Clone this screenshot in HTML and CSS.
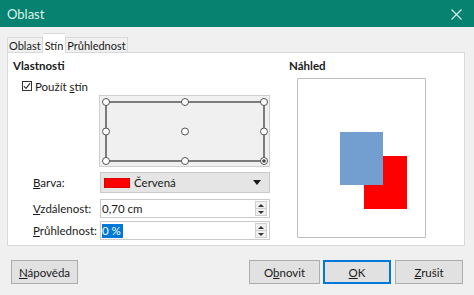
FILE: index.html
```html
<!DOCTYPE html>
<html lang="cs">
<head>
  <meta charset="UTF-8">
  <title>Oblast</title>
  <link rel="stylesheet" href="styles.css">
</head>
<body>
  <div class="window">
    <div class="titlebar">
      <span class="title">Oblast</span>
      <svg class="close" width="13" height="11" viewBox="0 0 13 11">
        <path d="M1.5 0.5 L11.5 10.5 M11.5 0.5 L1.5 10.5" stroke="#d6efe9" stroke-width="1.2" fill="none"/>
      </svg>
    </div>

    <div class="tabs">
      <div class="tab">Oblast</div>
      <div class="tab active">Stín</div>
      <div class="tab">Průhlednost</div>
    </div>

    <div class="panel">
      <div class="props">
        <div class="heading">Vlastnosti</div>
        <label class="check-row">
          <span class="checkbox">
            <svg width="8" height="8" viewBox="0 0 8 8"><path d="M0.8 4.2 L3 6.4 L7.2 1.2" stroke="#333" stroke-width="1.1" fill="none"/></svg>
          </span>
          <span>Použít <u>s</u>tín</span>
        </label>

        <div class="position-box">
          <svg width="171" height="72" viewBox="0 0 171 72">
            <rect x="7" y="7" width="158" height="59" fill="none" stroke="#4a4a4a" stroke-width="1.4"/>
            <g fill="#fff" stroke="#555" stroke-width="1">
              <circle cx="7" cy="7" r="3.5"/>
              <circle cx="86" cy="7" r="3.5"/>
              <circle cx="165" cy="7" r="3.5"/>
              <circle cx="7" cy="36.5" r="3.5"/>
              <circle cx="86" cy="36.5" r="3.5"/>
              <circle cx="165" cy="36.5" r="3.5"/>
              <circle cx="7" cy="66" r="3.5"/>
              <circle cx="86" cy="66" r="3.5"/>
              <circle cx="165" cy="66" r="3.5"/>
            </g>
            <circle cx="165" cy="66" r="1.8" fill="#444"/>
          </svg>
        </div>

        <div class="field field-color">
          <span class="label"><u>B</u>arva:</span>
          <div class="dropdown">
            <span class="swatch"></span>
            <span class="dropdown-text">Červená</span>
            <span class="arrow"></span>
          </div>
        </div>
        <div class="field field-dist">
          <span class="label"><u>V</u>zdálenost:</span>
          <div class="spin">
            <span class="spin-text">0,70 cm</span>
            <span class="spin-buttons"><span class="up"></span><span class="down"></span></span>
          </div>
        </div>
        <div class="field field-trans">
          <span class="label"><u>P</u>růhlednost:</span>
          <div class="spin">
            <span class="spin-text"><span class="selected">0 %</span></span>
            <span class="spin-buttons"><span class="up"></span><span class="down"></span></span>
          </div>
        </div>
      </div>

      <div class="preview-col">
        <div class="heading">Náhled</div>
        <div class="preview">
          <svg width="127" height="158" viewBox="0 0 127 158">
            <rect x="66" y="77" width="43" height="53" fill="#ff0000"/>
            <rect x="42" y="53" width="43" height="53" fill="#729fcf"/>
          </svg>
        </div>
      </div>
    </div>

    <div class="buttons">
      <button class="btn btn-help"><u>N</u>ápověda</button>
      <div class="right-buttons">
        <button class="btn btn-reset">O<u>b</u>novit</button>
        <button class="btn btn-ok"><u>O</u>K</button>
        <button class="btn btn-cancel"><u>Z</u>rušit</button>
      </div>
    </div>
  </div>
</body>
</html>
```

FILE: styles.css
```css
body {
  margin: 0;
  font-family: "Lato", "Open Sans", sans-serif;
  font-size: 11px;
  color: #1a1a1a;
}
u {
  text-decoration-thickness: 1px;
  text-underline-offset: 1px;
}
.window {
  width: 474px;
  height: 295px;
  background: #f0f0f0;
  overflow: hidden;
}
.titlebar {
  height: 27px;
  background: #088270;
  display: flex;
  align-items: center;
  justify-content: space-between;
  padding: 0 11px 0 7px;
}
.title {
  font-family: "Lato", sans-serif;
  font-size: 13px;
  color: #dcf2ec;
}
.close {
  margin-top: 1px;
}

.tabs {
  display: flex;
  align-items: flex-end;
  height: 19px;
  margin-top: 6px;
  padding-left: 7px;
}
.tab {
  height: 14px;
  line-height: 15px;
  padding: 0 1px 0 1px;
  border: 1px solid #d9d9d9;
  border-bottom: none;
  background: #f0f0f0;
  overflow: hidden;
  font-size: 11px;
}
.tab.active {
  height: 19px;
  line-height: 23px;
  background: #fff;
  margin-bottom: -1px;
  position: relative;
  z-index: 1;
  border-left: none;
  border-right: none;
  padding: 0 2px;
}

.panel {
  display: flex;
  width: 458px;
  height: 194px;
  margin-left: 7px;
  background: #fff;
  border: 1px solid #d9d9d9;
  box-sizing: border-box;
}
.props {
  width: 274px;
  padding: 6px 0 0 5px;
  box-sizing: border-box;
}
.heading {
  font-weight: bold;
  font-size: 11.5px;
  line-height: 14px;
  height: 14px;
}
.check-row {
  display: flex;
  align-items: center;
  height: 14px;
  margin-top: 6px;
  padding-left: 9px;
  font-size: 11.5px;
}
.checkbox {
  width: 10px;
  height: 10px;
  border: 1px solid #333;
  box-sizing: border-box;
  display: flex;
  align-items: center;
  justify-content: center;
  margin-right: 3px;
}
.position-box {
  width: 171px;
  height: 72px;
  margin: 2px 0 0 86px;
  background: #f0f0f0;
  border: 1px solid #cfcfcf;
  box-sizing: border-box;
  position: relative;
}
.position-box svg {
  display: block;
  margin: -1px;
}

.field {
  display: flex;
  align-items: center;
  padding-left: 20px;
  font-size: 11.5px;
}
.label {
  width: 67px;
}
.field-color {
  margin-top: 5px;
}
.field-dist {
  margin-top: 6px;
}
.field-trans {
  margin-top: 3px;
}
.dropdown {
  width: 170px;
  height: 21px;
  background: #e5e5e5;
  border: 1px solid #cacaca;
  box-sizing: border-box;
  display: flex;
  align-items: center;
  padding: 0 8px 0 3px;
}
.swatch {
  width: 26px;
  height: 10px;
  background: #ff0000;
  border: 1px solid #d00;
  box-sizing: border-box;
}
.dropdown-text {
  margin-left: 4px;
  flex-grow: 1;
}
.arrow {
  width: 0;
  height: 0;
  border-style: solid;
  border-width: 5px 4px 0 4px;
  border-color: #1a1a1a transparent transparent transparent;
}
.spin {
  width: 170px;
  height: 19px;
  background: #fff;
  border: 1px solid #cacaca;
  box-sizing: border-box;
  display: flex;
  align-items: center;
  padding: 0 1px 0 1px;
}
.spin-text {
  flex-grow: 1;
}
.selected {
  background: #0078d7;
  color: #fff;
  padding: 0 2px 1px 0;
}
.spin-buttons {
  width: 12px;
  height: 15px;
  display: flex;
  flex-direction: column;
  margin-right: 1px;
}
.spin-buttons span {
  flex: 1;
  border: 1px solid #cfcfcf;
  background: #f0f0f0;
  display: flex;
  align-items: center;
  justify-content: center;
}
.spin-buttons .down {
  border-top: none;
}
.spin-buttons .up::after,
.spin-buttons .down::after {
  content: "";
  border-style: solid;
}
.spin-buttons .up::after {
  border-width: 0 3px 3px 3px;
  border-color: transparent transparent #333 transparent;
}
.spin-buttons .down::after {
  border-width: 3px 3px 0 3px;
  border-color: #333 transparent transparent transparent;
}

.preview-col {
  padding: 6px 0 0 7px;
}
.preview {
  width: 129px;
  height: 160px;
  margin: 5px 0 0 8px;
  border: 1px solid #bdbdbd;
  border-radius: 1px;
  box-sizing: border-box;
}
.preview svg {
  display: block;
}

.buttons {
  display: flex;
  justify-content: space-between;
  margin-top: 14px;
  padding: 0 11px;
}
.right-buttons {
  display: flex;
  gap: 3px;
}
.btn {
  height: 24px;
  font-family: "Lato", "Open Sans", sans-serif;
  font-size: 11.5px;
  color: #1a1a1a;
  background: #e1e1e1;
  border: 1px solid #adadad;
  padding: 0;
}
.btn-help {
  width: 67px;
}
.btn-reset {
  width: 71px;
}
.btn-ok {
  width: 68px;
  border-color: #0078d7;
  box-shadow: inset 0 0 0 1px #0078d7;
}
.btn-cancel {
  width: 68px;
  margin-left: 1px;
}
```
